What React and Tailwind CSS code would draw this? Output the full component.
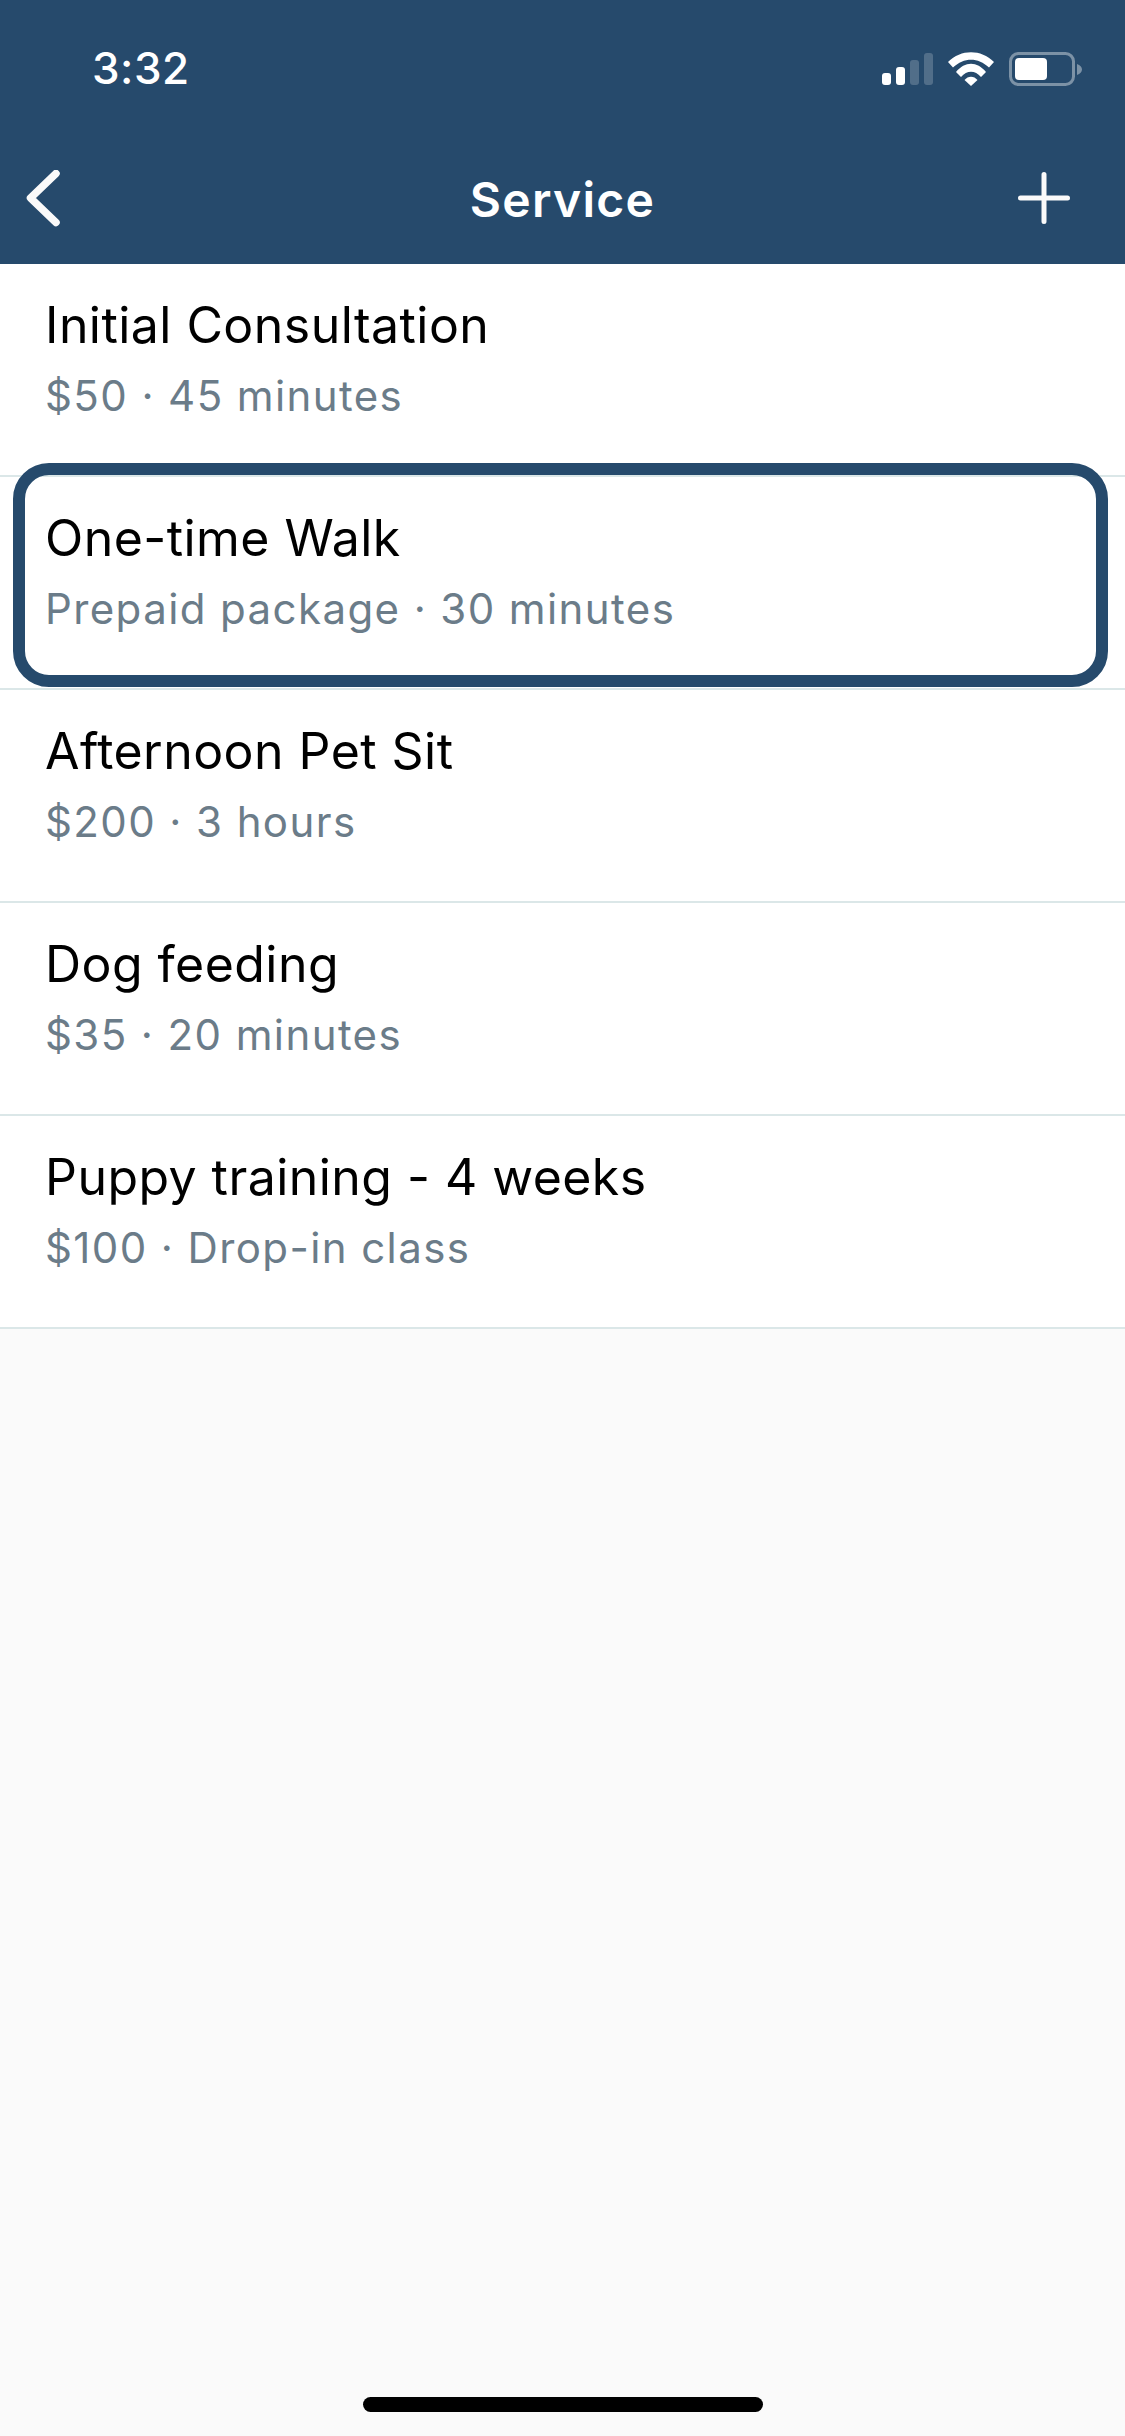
import React from 'react';

const services = [
  { name: 'Initial Consultation', detail: '$50 · 45 minutes' },
  { name: 'One-time Walk', detail: 'Prepaid package · 30 minutes', selected: true },
  { name: 'Afternoon Pet Sit', detail: '$200 · 3 hours' },
  { name: 'Dog feeding', detail: '$35 · 20 minutes' },
  { name: 'Puppy training - 4 weeks', detail: '$100 · Drop-in class' },
];

const StatusIcons = () => (
  <svg className="mt-[2px]" width="204" height="38" viewBox="0 0 204 38" fill="none">
    <rect x="2" y="23" width="9" height="12" rx="3" fill="#fff" />
    <rect x="16" y="17" width="9" height="18" rx="3" fill="#fff" />
    <rect x="30" y="10" width="9" height="25" rx="3" fill="#fff" fillOpacity="0.2" />
    <rect x="44" y="3" width="9" height="32" rx="3" fill="#fff" fillOpacity="0.2" />
    <path d="M68 12 C81 -1 101 -1 114 12 L109 17.5 C98 7 84 7 73 17.5 Z" fill="#fff" />
    <path d="M76 22 C85 11 97 11 106 22 L101 27 C95 20 87 20 81 27 Z" fill="#fff" />
    <path d="M84.5 30 C88 25.5 94 25.5 97.5 30 L91 36 Z" fill="#fff" />
    <rect x="130.5" y="3.5" width="63" height="31" rx="8" stroke="#fff" strokeOpacity="0.4" strokeWidth="3" />
    <rect x="135" y="8" width="32" height="22" rx="4" fill="#fff" />
    <path d="M197 14 C200 15 202 17 202 19.5 C202 22 200 24 197 25 Z" fill="#fff" fillOpacity="0.4" />
  </svg>
);

export default function App() {
  return (
    <div className="flex flex-col h-[2436px] bg-[#fafafa] font-['Inter',sans-serif]">
      <div className="bg-[#264a6c] h-[264px] shrink-0 text-white">
        <div className="flex items-center justify-between h-[136px] pl-[92px] pr-[41px]">
          <span className="text-[44px] font-medium leading-none tracking-[0.5px]">3:32</span>
          <StatusIcons />
        </div>
        <div className="grid grid-cols-[1fr_auto_1fr] items-center h-[128px] pl-[26px] pr-[54px]">
          <svg width="36" height="60" viewBox="0 0 36 60" fill="none">
            <path d="M30 3.5 L4.5 28 L30 52.5" stroke="#fafafa" strokeWidth="7.5" strokeLinecap="round" strokeLinejoin="round" />
          </svg>
          <span className="text-[48px] font-semibold leading-none tracking-[1.3px] relative left-[14px]">Service</span>
          <svg className="justify-self-end -mt-[4px]" width="54" height="54" viewBox="0 0 54 54" fill="none">
            <path d="M27 3.5 V50.5 M3.5 27 H50.5" stroke="#fafafa" strokeWidth="5" strokeLinecap="round" />
          </svg>
        </div>
      </div>

      <div className="flex flex-col bg-white">
        {services.map((s) => (
          <div key={s.name} className="relative h-[213px] border-b-2 border-[#dbe7e8] pl-[45px] pt-[29px]">
            <div className="text-[50px] leading-[64px] tracking-[0.45px] text-black">{s.name}</div>
            <div className="text-[42px] leading-[56px] mt-[11px] tracking-[1.4px] text-[#6b7c89]">{s.detail}</div>
            {s.selected && (
              <div className="absolute left-[13px] right-[17px] top-[-14px] bottom-[1px] border-[12px] border-[#264a6c] rounded-[36px]" />
            )}
          </div>
        ))}
      </div>

      <div className="flex-1 flex flex-col justify-end items-center pb-[24px]">
        <div className="w-[400px] h-[15px] rounded-[8px] bg-black" />
      </div>
    </div>
  );
}
